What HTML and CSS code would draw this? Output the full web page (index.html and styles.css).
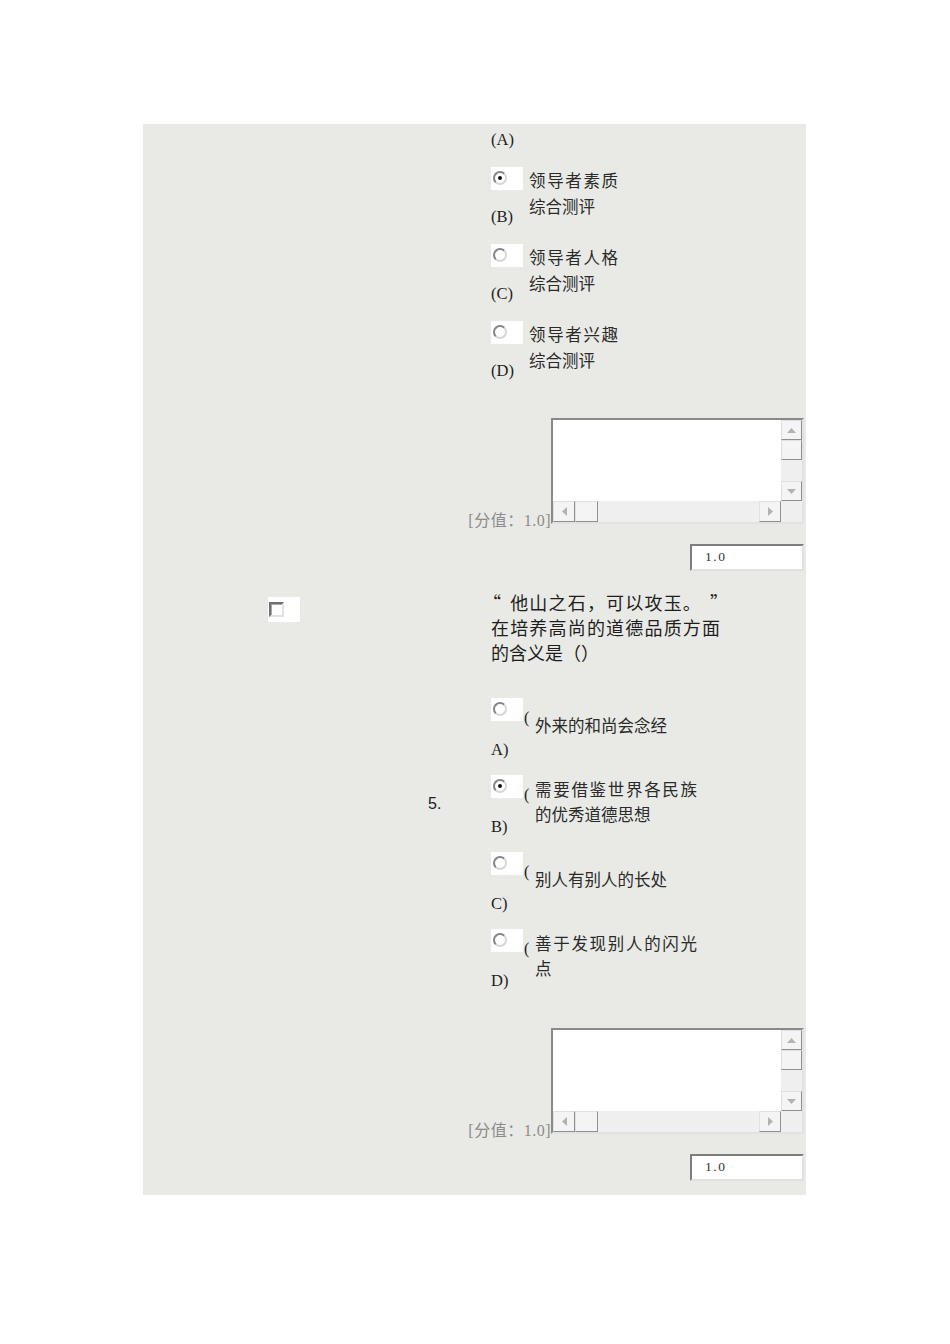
FILE: index.html
```html
<!DOCTYPE html>
<html lang="zh-CN">
<head>
<meta charset="utf-8">
<title>试题</title>
<link rel="stylesheet" href="styles.css">
</head>
<body>
<div class="panel">
  <section class="qrow">
    <div class="qbody">
      <div class="lbl">(A)</div>
      <div class="opts">
        <div class="opt">
          <div class="opt-left">
            <span class="ctl"><span class="radio checked"></span></span>
            <span class="lbl lbl-gap">(B)</span>
          </div>
          <div class="opt-text">领导者素质综合测评</div>
        </div>
        <div class="opt">
          <div class="opt-left">
            <span class="ctl"><span class="radio"></span></span>
            <span class="lbl lbl-gap">(C)</span>
          </div>
          <div class="opt-text">领导者人格综合测评</div>
        </div>
        <div class="opt">
          <div class="opt-left">
            <span class="ctl"><span class="radio"></span></span>
            <span class="lbl lbl-gap">(D)</span>
          </div>
          <div class="opt-text">领导者兴趣综合测评</div>
        </div>
      </div>
    </div>
  </section>

  <div class="score-row score-row-1">
    <span class="score">[分值：1.0]</span>
    <div class="ta">
      <div class="ta-main">
        <div class="ta-area"></div>
        <div class="vbar">
          <div class="sbtn sbtn-v"><svg width="9" height="5" viewBox="0 0 9 5"><polygon points="0,5 9,5 4.5,0" fill="#b2b2b2"/></svg></div>
          <div class="thumb-v"></div>
          <div class="track"></div>
          <div class="sbtn sbtn-v"><svg width="9" height="5" viewBox="0 0 9 5"><polygon points="0,0 9,0 4.5,5" fill="#b2b2b2"/></svg></div>
        </div>
      </div>
      <div class="hbar">
        <div class="sbtn sbtn-h"><svg width="5" height="9" viewBox="0 0 5 9"><polygon points="5,0 5,9 0,4.5" fill="#b2b2b2"/></svg></div>
        <div class="thumb-h"></div>
        <div class="track"></div>
        <div class="sbtn sbtn-h"><svg width="5" height="9" viewBox="0 0 5 9"><polygon points="0,0 0,9 5,4.5" fill="#b2b2b2"/></svg></div>
        <div class="corner"></div>
      </div>
    </div>
  </div>
  <div class="input-row"><div class="num-input">1.0</div></div>

  <section class="qrow q2">
    <div class="qcheck"><span class="chk-box"><span class="chk"></span></span></div>
    <div class="qnum">5.</div>
    <div class="qbody qbody2">
      <div class="qtext"><span class="qo">“</span>他山之石，可以攻玉。<span class="qc">”</span>在培养高尚的道德品质方面的含义是（）</div>
      <div class="opts opts2">
        <div class="opt2">
          <div class="opt-left">
            <span class="ctl"><span class="radio"></span></span>
            <span class="lbl lbl-gap2">A)</span>
          </div>
          <span class="paren">(</span>
          <div class="opt2-text"><div class="opt2-inner">外来的和尚会念经</div></div>
        </div>
        <div class="opt2">
          <div class="opt-left">
            <span class="ctl"><span class="radio checked"></span></span>
            <span class="lbl lbl-gap2">B)</span>
          </div>
          <span class="paren">(</span>
          <div class="opt2-text"><div class="opt2-inner">需要借鉴世界各民族的优秀道德思想</div></div>
        </div>
        <div class="opt2">
          <div class="opt-left">
            <span class="ctl"><span class="radio"></span></span>
            <span class="lbl lbl-gap2">C)</span>
          </div>
          <span class="paren">(</span>
          <div class="opt2-text"><div class="opt2-inner">别人有别人的长处</div></div>
        </div>
        <div class="opt2">
          <div class="opt-left">
            <span class="ctl"><span class="radio"></span></span>
            <span class="lbl lbl-gap2">D)</span>
          </div>
          <span class="paren">(</span>
          <div class="opt2-text"><div class="opt2-inner">善于发现别人的闪光点</div></div>
        </div>
      </div>
    </div>
  </section>

  <div class="score-row score-row-2">
    <span class="score">[分值：1.0]</span>
    <div class="ta">
      <div class="ta-main">
        <div class="ta-area"></div>
        <div class="vbar">
          <div class="sbtn sbtn-v"><svg width="9" height="5" viewBox="0 0 9 5"><polygon points="0,5 9,5 4.5,0" fill="#b2b2b2"/></svg></div>
          <div class="thumb-v"></div>
          <div class="track"></div>
          <div class="sbtn sbtn-v"><svg width="9" height="5" viewBox="0 0 9 5"><polygon points="0,0 9,0 4.5,5" fill="#b2b2b2"/></svg></div>
        </div>
      </div>
      <div class="hbar">
        <div class="sbtn sbtn-h"><svg width="5" height="9" viewBox="0 0 5 9"><polygon points="5,0 5,9 0,4.5" fill="#b2b2b2"/></svg></div>
        <div class="thumb-h"></div>
        <div class="track"></div>
        <div class="sbtn sbtn-h"><svg width="5" height="9" viewBox="0 0 5 9"><polygon points="0,0 0,9 5,4.5" fill="#b2b2b2"/></svg></div>
        <div class="corner"></div>
      </div>
    </div>
  </div>
  <div class="input-row"><div class="num-input">1.0</div></div>
</div>
</body>
</html>
```

FILE: styles.css
```css
html, body {
  margin: 0;
  padding: 0;
  background: #ffffff;
}

body {
  font-family: "Liberation Serif", "Noto Sans CJK SC", serif;
  color: #222222;
}

.panel {
  margin: 124px 0 0 143px;
  width: 663px;
  background: #e9eae5;
  padding: 6px 0 14px 0;
  box-sizing: border-box;
}

.qrow {
  display: grid;
  grid-template-columns: 125px 160px 63px 1fr;
}

.qbody {
  grid-column: 4;
}

.lbl {
  display: block;
  font-family: "Liberation Serif", serif;
  font-size: 16.5px;
  line-height: 20px;
  color: #1e1e1e;
  height: 20px;
}

.opts {
  display: flex;
  flex-direction: column;
  gap: 17px;
  margin-top: 17px;
}

.opt {
  display: flex;
  height: 60px;
}

.opt-left {
  width: 32px;
  display: flex;
  flex-direction: column;
}

.ctl {
  display: block;
  width: 32px;
  height: 23px;
  background: #ffffff;
  padding: 4px 0 0 2px;
  box-sizing: border-box;
}

.radio {
  display: block;
  width: 14px;
  height: 14px;
  box-sizing: border-box;
  border-radius: 50%;
  border: 2px solid;
  border-color: #858585 #d6d6d6 #d6d6d6 #858585;
  background: #ffffff;
  position: relative;
}

.radio.checked::after {
  content: "";
  position: absolute;
  left: 3px;
  top: 3px;
  width: 4px;
  height: 4px;
  border-radius: 50%;
  background: #111111;
}

.lbl-gap {
  margin-top: 17px;
}

.lbl-gap2 {
  margin-top: 19px;
}

.opt-text {
  margin-left: 6px;
  width: 89px;
  font-family: "Noto Sans CJK SC", sans-serif;
  font-size: 16.5px;
  line-height: 26px;
  text-align: justify;
  color: #2a2a2a;
}

/* score + textarea */
.score-row {
  display: flex;
  justify-content: flex-end;
  align-items: flex-end;
  padding-right: 2px;
  height: 106px;
}

.score-row-1 {
  margin-top: 37px;
}

.score-row-2 {
  margin-top: 10px;
}

.score {
  font-family: "Liberation Serif", "Noto Sans CJK SC", serif;
  font-size: 16px;
  letter-spacing: 0.5px;
  line-height: 6px;
  color: #8c8c8c;
  white-space: nowrap;
}

.ta {
  width: 253px;
  height: 106px;
  box-sizing: border-box;
  border: 2px solid;
  border-color: #8a8a8a #e2e2e2 #e2e2e2 #8a8a8a;
  background: #ffffff;
  display: flex;
  flex-direction: column;
}

.ta-main {
  display: flex;
  height: 81px;
}

.ta-area {
  flex: 1;
  background: #ffffff;
}

.vbar {
  width: 21px;
  display: flex;
  flex-direction: column;
  background: #efefef;
}

.hbar {
  height: 21px;
  display: flex;
  background: #efefef;
}

.sbtn {
  box-sizing: border-box;
  background: #f4f4f4;
  border: 1px solid;
  border-color: #e0e0e0 #8f8f8f #8f8f8f #e0e0e0;
  display: flex;
  align-items: center;
  justify-content: center;
}

.sbtn-v {
  height: 20px;
}

.sbtn-h {
  width: 22px;
}

.thumb-v {
  height: 20px;
  box-sizing: border-box;
  background: #f4f4f4;
  border: 1px solid;
  border-color: #e0e0e0 #8f8f8f #8f8f8f #e0e0e0;
}

.thumb-h {
  width: 23px;
  box-sizing: border-box;
  background: #f4f4f4;
  border: 1px solid;
  border-color: #e0e0e0 #8f8f8f #8f8f8f #e0e0e0;
}

.track {
  flex: 1;
  background: #efefef;
}

.corner {
  width: 21px;
  background: #efefef;
}

/* numeric input */
.input-row {
  display: flex;
  justify-content: flex-end;
  padding-right: 2px;
  margin-top: 20px;
}

.num-input {
  width: 114px;
  height: 27px;
  box-sizing: border-box;
  border: 2px solid;
  border-color: #7d7d7d #e0e0e0 #e0e0e0 #7d7d7d;
  background: #ffffff;
  font-family: "Liberation Serif", serif;
  font-size: 13.5px;
  letter-spacing: 1.6px;
  line-height: 21px;
  padding-left: 13px;
  color: #333333;
}

/* question 5 */
.q2 {
  margin-top: 19px;
}

.qcheck {
  grid-column: 2;
  align-self: start;
  padding-top: 7px;
}

.chk-box {
  display: block;
  width: 32px;
  height: 25px;
  background: #ffffff;
  padding: 5px 0 0 1px;
  box-sizing: border-box;
}

.chk {
  display: block;
  width: 15px;
  height: 15px;
  box-sizing: border-box;
  border: 2px solid;
  border-color: #707070 #e2e2e2 #e2e2e2 #707070;
  box-shadow: inset 1px 1px 0 #a9a9a9;
  background: #ffffff;
}

.qnum {
  grid-column: 3;
  align-self: center;
  font-family: "Liberation Sans", sans-serif;
  font-size: 16px;
  line-height: 20px;
  color: #222222;
}

.qbody2 {
  padding-bottom: 27px;
}

.qtext {
  width: 229px;
  font-family: "Noto Sans CJK SC", sans-serif;
  font-size: 18px;
  line-height: 25px;
  text-align: justify;
  color: #1e1e1e;
}

.qo {
  display: inline-block;
  width: 18px;
  text-indent: -8px;
  text-align: left;
}

.qc {
  display: inline-block;
  width: 18px;
  text-indent: 8px;
  text-align: left;
}

.opts2 {
  margin-top: 33px;
  gap: 15px;
}

.opt2 {
  display: flex;
  height: 62px;
}

.paren {
  width: 11px;
  margin-left: 1px;
  font-family: "Liberation Serif", serif;
  font-size: 16px;
  line-height: 20px;
  margin-top: 10px;
  height: 20px;
  color: #222222;
}

.opt2-text {
  height: 54px;
  display: flex;
  align-items: center;
}

.opt2-inner {
  width: 162px;
  font-family: "Noto Sans CJK SC", sans-serif;
  font-size: 16.5px;
  line-height: 25px;
  text-align: justify;
  color: #2a2a2a;
}
```
